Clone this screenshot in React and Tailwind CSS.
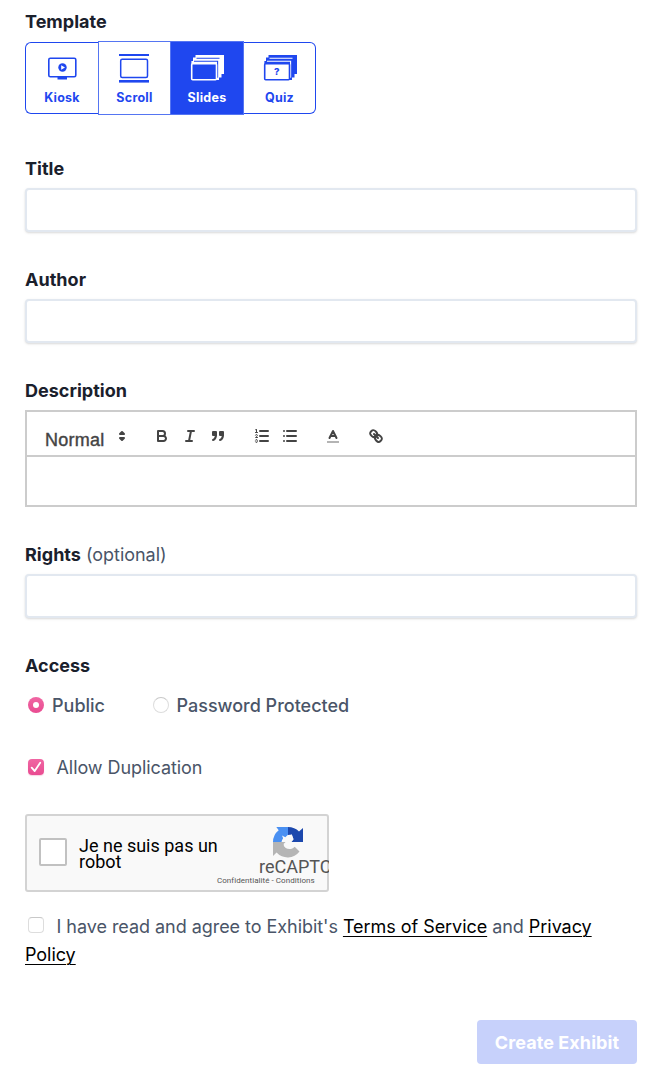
import React from "react";

function Label({ children, className = "" }) {
  return (
    <div className={`flex h-7 items-center whitespace-pre pt-0.5 text-[18px] font-bold leading-[26px] tracking-[0.02px] text-[#1a202c] ${className}`}>
      {children}
    </div>
  );
}

function Field({ label, extra, className = "" }) {
  return (
    <div className={className}>
      <Label>
        {label}
        {extra && <span className="font-normal tracking-[-0.04px] text-[#4a5568]"> {extra}</span>}
      </Label>
      <input className="mt-1.5 block h-11 w-full rounded-[4px] border-2 border-[#e2e8f0] bg-white px-3 shadow-[0_1px_3px_rgba(0,0,0,0.1),0_1px_2px_rgba(0,0,0,0.06)] outline-none" />
    </div>
  );
}

function KioskIcon() {
  return (
    <svg width="36" height="32" viewBox="0 0 36 32" fill="none">
      <rect x="4.8" y="6.2" width="27" height="18.6" rx="1.5" stroke="currentColor" strokeWidth="1.6" />
      <circle cx="18.5" cy="15.500" r="4.2" fill="currentColor" />
      <path d="M17.200 13.200v4.600l3.800-2.300z" fill="#fff" />
      <rect x="13.500" y="25" width="9.500" height="2.500" fill="currentColor" />
    </svg>
  );
}

function ScrollIcon() {
  return (
    <svg width="36" height="32" viewBox="0 0 36 32" fill="none">
      <path d="M2 3h30" stroke="currentColor" strokeWidth="2" />
      <path d="M2 29.300h30" stroke="currentColor" strokeWidth="2.600" />
      <rect x="3.700" y="7.200" width="26.800" height="18.300" rx="1.500" stroke="currentColor" strokeWidth="1.500" />
    </svg>
  );
}

function DeckIcon({ face, question }) {
  return (
    <svg width="36" height="32" viewBox="0 0 36 32" fill="none">
      <path d="M6.500 3H35v19h-2.500v3.500H30V28h-3V12H2.400V9h1.600V5.500h2.500z" fill="currentColor" />
      <path d="M7.500 6.200H30.500M5 9.200H28.600v16.500" stroke={face} strokeWidth="1.100" />
      <rect x="2.700" y="11.800" width="24.800" height="16" rx="1" fill={face} stroke="currentColor" strokeWidth="1.600" />
      {question && (
        <text x="15" y="23.200" textAnchor="middle" fill="currentColor" fontSize="9.500" fontWeight="800" fontFamily="Inter, sans-serif">?</text>
      )}
    </svg>
  );
}

function Template({ icon, label, className }) {
  return (
    <button className={`flex flex-col items-center text-[12.5px] font-bold leading-4 tracking-[0.25px] ${className}`}>
      {icon}
      <span className="mt-1.5">{label}</span>
    </button>
  );
}

function Tool({ children, className = "" }) {
  return (
    <button className={`flex h-6 w-7 items-center justify-center ${className}`}>
      <svg width="18" height="18" viewBox="0 0 18 18" fill="none" stroke="#444" strokeWidth="2" strokeLinecap="round" strokeLinejoin="round">
        {children}
      </svg>
    </button>
  );
}

function Editor() {
  return (
    <div className="mt-1.5 h-[97px] border-2 border-[#ccc] bg-white">
      <div className="flex h-[45px] items-start border-b-2 border-[#ccc] pt-3">
        <div className="flex h-6 w-[94px] items-center pl-[18px] pt-[8px] font-['Liberation_Sans',sans-serif] text-[18px] tracking-[0.25px] text-[#444] [-webkit-text-stroke:0.4px_#444]">
          <span>Normal</span>
        </div>
        <svg className="-ml-2 mt-[3px]" width="18" height="18" viewBox="0 0 18 18" stroke="#444" strokeWidth="2" strokeLinecap="round" strokeLinejoin="round" fill="#444">
          <polygon points="7 11 9 13 11 11" />
          <polygon points="7 7 9 5 11 7" />
        </svg>
        <Tool className="ml-[17px]">
          <path d="M5,4H9.5A2.5,2.5,0,0,1,12,6.5v0A2.5,2.5,0,0,1,9.5,9H5V4Z" />
          <path d="M5,9h5.5A2.5,2.5,0,0,1,13,11.5v0A2.5,2.5,0,0,1,10.5,14H5V9Z" />
        </Tool>
        <Tool>
          <path d="M7 4h6M5 14h6M8 14L10 4" />
        </Tool>
        <Tool>
          <rect x="4" y="5" width="3" height="3" fill="#444" />
          <rect x="11" y="5" width="3" height="3" fill="#444" />
          <path fill="#444" fillRule="evenodd" d="M7,8c0,4.031-3,5-3,5" />
          <path fill="#444" fillRule="evenodd" d="M14,8c0,4.031-3,5-3,5" />
        </Tool>
        <Tool className="ml-4">
          <path d="M7 4h8M7 9h8M7 14h8" />
          <path strokeWidth="1" d="M2.5 5.5h2" />
          <path fill="#444" stroke="none" d="M3.5,6A0.5,0.5,0,0,1,3,5.5V3.085l-0.276.138A0.5,0.5,0,0,1,2.053,3c-0.124-.247-0.023-0.324.224-0.447l1-.5A0.5,0.5,0,0,1,4,2.5v3A0.5,0.5,0,0,1,3.5,6Z" />
          <path strokeWidth="1" d="M4.5,10.5h-2c0-.234,1.85-1.076,1.85-2.234A0.959,0.959,0,0,0,2.5,8.156" />
          <path strokeWidth="1" d="M2.5,14.846a0.959,0.959,0,0,0,1.85-.109A0.7,0.7,0,0,0,3.75,14a0.688,0.688,0,0,0,.6-0.736,0.959,0.959,0,0,0-1.85-.109" />
        </Tool>
        <Tool>
          <path d="M6 4h9M6 9h9M6 14h9M3 4h0M3 9h0M3 14h0" />
        </Tool>
        <Tool className="ml-[15px]">
          <path opacity="0.4" d="M3 15h12" strokeLinecap="butt" />
          <path d="M5.5 11L9 4l3.5 7M11.63 9H6.38" />
        </Tool>
        <Tool className="ml-[15px]">
          <path d="M7 7l4 4" />
          <path d="M8.9,4.577a3.476,3.476,0,0,1,.36,4.679A3.476,3.476,0,0,1,4.577,8.9C3.185,7.5,2.035,6.4,4.217,4.217S7.5,3.185,8.9,4.577Z" />
          <path d="M13.423,9.1a3.476,3.476,0,0,0-4.679-.36,3.476,3.476,0,0,0,.36,4.679c1.392,1.392,2.5,2.542,4.679.36S14.815,10.5,13.423,9.1Z" />
        </Tool>
      </div>
    </div>
  );
}

function Captcha() {
  return (
    <div className="mt-[33px] flex h-[78px] w-[304px] overflow-clip rounded-[3px] border-2 border-[#d3d3d3] bg-[#f9f9f9] font-[Roboto,sans-serif] [overflow-clip-margin:border-box]">
      <div className="ml-3 mt-[22px] size-7 shrink-0 rounded-[2px] border-2 border-[#c1c1c1] bg-white" />
      <div className="ml-3 mt-[22px] w-[138px] shrink-0 whitespace-nowrap text-[18px] leading-4 text-black">
        Je ne suis pas un
        <br />
        robot
      </div>
      <div className="flex w-[112px] shrink-0 flex-col text-[#555]">
        <svg className="ml-[55px] mt-[10px] shrink-0" width="32" height="32" viewBox="0 0 32 32">
          <path fill="#4a90f2" d="M16 1H4.300l2.400 3.200A15 15 0 0 0 1 16h8.500c.3-1.600.8-2.800 1.600-3.800L10 9.500l3.300 1.700L16 8.800z" />
          <path fill="#1c48ad" d="M16 1c4.400 0 8.300 1.600 11 4.600L31 2v14H19.500l2-2.500-1-3-.5-2L16 9z" />
          <path fill="#b5b5b5" d="M1 16v14l3.500-3.400A15 15 0 0 0 27.500 25.500l-4.800-4.700c-1.500 1.700-3.200 2.300-5.200 2.300-3 0-5-1.600-5.800-3.800L14 16z" />
          <path fill="#f9f9f9" d="M11 11.800l3.500 1.200 5-4.500 2 4.500-3 3h5l-1 4.500-4.500 2-5-1.500-1.500-3 2.500-2.200z" />
        </svg>
        <div className="ml-[42px] whitespace-nowrap text-[18px] leading-[18px]">reCAPTCHA</div>
        <div className="whitespace-nowrap text-[8px] leading-[10px] tracking-[0.05px]">Confidentialité - Conditions</div>
      </div>
    </div>
  );
}

export default function App() {
  return (
    <main className="h-[1071px] w-[661px] bg-white pl-[25px] pr-6 pt-[7px] font-[Inter,sans-serif] text-[18px] leading-7 text-[#4a5568]">
      <Label>Template</Label>
      <div className="mt-1.5 flex h-[74px] items-center text-[#1f47ef]">
        <Template icon={<KioskIcon />} label="Kiosk" className="h-[72px] w-[73px] rounded-l-[6px] border border-r-0 border-[#1f47ef] pt-[9px]" />
        <Template icon={<ScrollIcon />} label="Scroll" className="h-[74px] w-[72px] border border-r-0 border-[#5575f2] pt-[10px]" />
        <Template icon={<DeckIcon face="#1f47ef" />} label="Slides" className="h-[74px] w-[74px] border border-[#5575f2] bg-[#1f47ef] pt-[10px] text-white" />
        <Template icon={<DeckIcon face="#fff" question />} label="Quiz" className="h-[72px] w-[72px] rounded-r-[6px] border border-l-0 border-[#1f47ef] pt-[9px]" />
      </div>
      <Field label="Title" className="mt-[39px]" />
      <Field label="Author" className="mt-[33px]" />
      <div className="mt-[33px]">
        <Label>Description</Label>
        <Editor />
      </div>
      <Field label="Rights" extra="(optional)" className="mt-[33px]" />
      <Label className="mt-[33px]">Access</Label>
      <div className="mt-3 flex h-7 items-center font-medium">
        <span className="ml-[3px] flex size-4 items-center justify-center rounded-full bg-linear-to-b from-[#f066a3] to-[#e94b91]">
          <span className="size-1.5 rounded-full bg-white" />
        </span>
        <span className="ml-2 w-[52px] pt-0.5">Public</span>
        <span className="ml-[49px] size-4 rounded-full border border-[#ddd] border-t-[#c8c8c8] bg-white" />
        <span className="ml-[7.500px] pt-0.5">Password Protected</span>
      </div>
      <div className="mt-[34px] flex h-7 items-center">
        <span className="ml-[3px] flex size-4 items-center justify-center rounded-[4px] bg-linear-to-b from-[#f066a3] to-[#e94b91] shadow-[0_1px_1px_rgba(233,75,145,0.25)]">
          <svg width="16" height="16" viewBox="0 0 16 16" fill="none" stroke="#fff" strokeWidth="1.8" strokeLinecap="round" strokeLinejoin="round">
            <path d="M3.700 8.700l3 3.400 5.500-8.400" />
          </svg>
        </span>
        <span className="ml-[12.500px] pt-0.5 tracking-[-0.07px]">Allow Duplication</span>
      </div>
      <Captcha />
      <p className="mt-[21px] whitespace-nowrap tracking-[-0.045px]">
        <span className="ml-[3px] mr-[12.500px] inline-block size-4 rounded-[4px] border border-[#ddd] border-t-[#c8c8c8] bg-white align-[0px]" />
        I have read and agree to Exhibit's <a className="text-black underline decoration-1 underline-offset-[3px]">Terms of Service</a> and{" "}
        <a className="text-black underline decoration-1 underline-offset-[3px]">
          Privacy
          <br />
          Policy
        </a>
      </p>
      <div className="mt-[51px] flex justify-end">
        <button className="h-11 w-40 rounded-[4px] bg-[#c7d1fb] pt-0.5 text-[18px] font-bold tracking-[0.08px] text-white">Create Exhibit</button>
      </div>
    </main>
  );
}
